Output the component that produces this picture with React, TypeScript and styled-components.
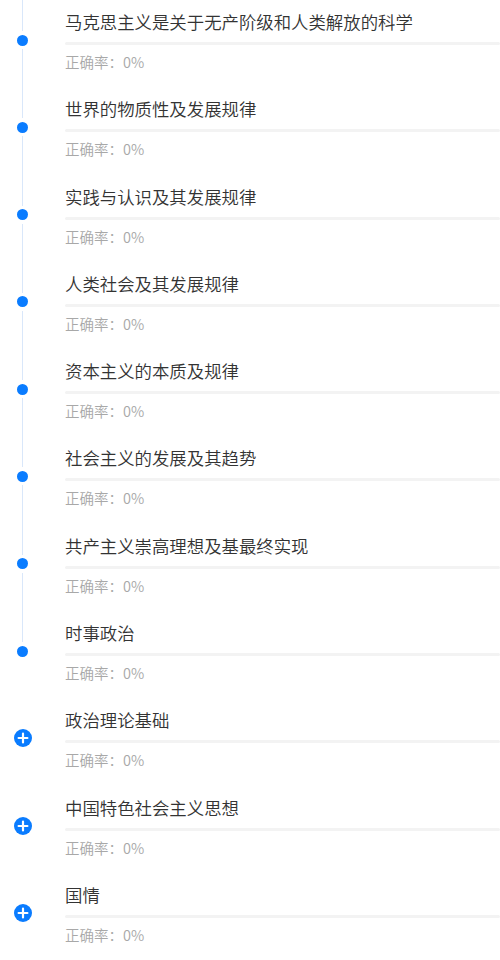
import styled, { createGlobalStyle } from 'styled-components';

const GlobalStyle = createGlobalStyle`
	html, body {
		margin: 0;
		padding: 0;
		background: #ffffff;
	}
	body {
		font-family: "Noto Sans CJK SC", "Noto Sans", sans-serif;
		overflow: hidden;
	}
`;

type Chapter = {
	title: string;
	rate: number;
	locked?: boolean;
};

const chapters: Chapter[] = [
	{ title: '马克思主义是关于无产阶级和人类解放的科学', rate: 0 },
	{ title: '世界的物质性及发展规律', rate: 0 },
	{ title: '实践与认识及其发展规律', rate: 0 },
	{ title: '人类社会及其发展规律', rate: 0 },
	{ title: '资本主义的本质及规律', rate: 0 },
	{ title: '社会主义的发展及其趋势', rate: 0 },
	{ title: '共产主义崇高理想及基最终实现', rate: 0 },
	{ title: '时事政治', rate: 0 },
	{ title: '政治理论基础', rate: 0, locked: true },
	{ title: '中国特色社会主义思想', rate: 0, locked: true },
	{ title: '国情', rate: 0, locked: true },
];

const PlusIcon = () => (
	<svg width="18" height="18" viewBox="0 0 18 18">
		<circle cx="9" cy="9" r="9" fill="#0a7cff" />
		<path d="M9 4.6v8.8M4.6 9h8.8" stroke="#fff" strokeWidth="2.2" strokeLinecap="round" />
	</svg>
);

const App = () => {
	return (
		<>
			<GlobalStyle />
			<List>
				{chapters.map((c, i) => {
					const next = chapters[i + 1];
					const showBelow = !c.locked && next && !next.locked;
					return (
						<Item key={c.title}>
							<Rail>
								<Line $visible={!c.locked} />
								<Marker>{c.locked ? <PlusIcon /> : <Dot />}</Marker>
								<Line $visible={!!showBelow} $grow />
							</Rail>
							<Content>
								<Title>{c.title}</Title>
								<Bar>
									<BarFill style={{ width: `${c.rate}%` }} />
								</Bar>
								<Rate>正确率：{c.rate}%</Rate>
							</Content>
						</Item>
					);
				})}
			</List>
		</>
	);
};

export default App;

const List = styled.div`
	display: flex;
	flex-direction: column;
`;

const Item = styled.div`
	display: flex;
	height: 87.3px;
`;

const Rail = styled.div`
	width: 45px;
	flex-shrink: 0;
	display: flex;
	flex-direction: column;
	align-items: center;
`;

const Line = styled.div<{ $visible: boolean; $grow?: boolean }>`
	width: 1px;
	height: ${(p) => (p.$grow ? 'auto' : '31px')};
	flex: ${(p) => (p.$grow ? '1' : 'none')};
	background: ${(p) => (p.$visible ? '#d9e7fa' : 'transparent')};
`;

const Marker = styled.div`
	height: 18px;
	display: flex;
	align-items: center;
	justify-content: center;
`;

const Dot = styled.div`
	width: 11px;
	height: 11px;
	border-radius: 50%;
	background: #0a7cff;
`;

const Content = styled.div`
	flex: 1;
	margin-left: 20px;
	padding-top: 11px;
	min-width: 0;
`;

const Title = styled.div`
	font-size: 17.4px;
	font-weight: 350;
	line-height: 22px;
	color: #333333;
	white-space: nowrap;
`;

const Bar = styled.div`
	margin-top: 9px;
	height: 3px;
	background: #f3f3f3;
	border-radius: 2px;
	overflow: hidden;
`;

const BarFill = styled.div`
	height: 100%;
	background: #0a7cff;
`;

const Rate = styled.div`
	margin-top: 7px;
	font-size: 14.5px;
	font-weight: 350;
	line-height: 20px;
	color: #a8a8a8;
`;
